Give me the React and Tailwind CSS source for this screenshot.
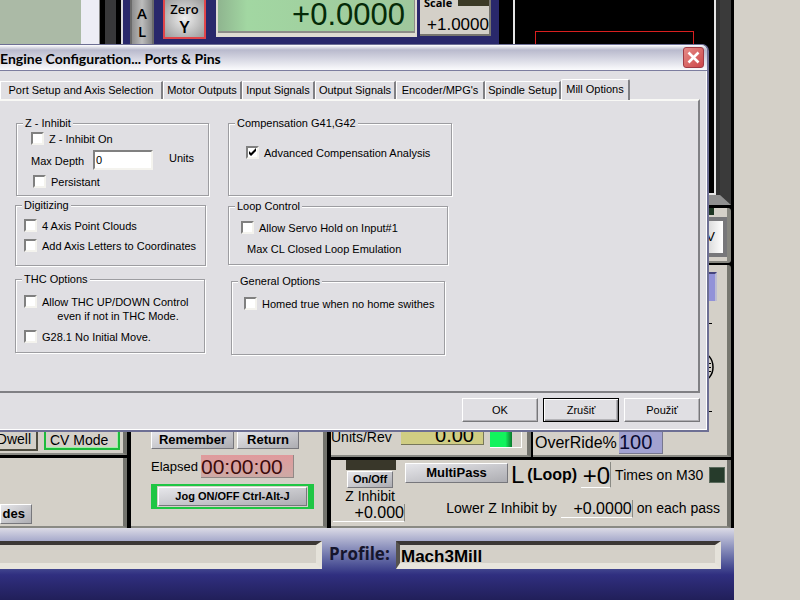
import React, { useState } from 'react';

const TABS = [
    'Port Setup and Axis Selection',
    'Motor Outputs',
    'Input Signals',
    'Output Signals',
    "Encoder/MPG's",
    'Spindle Setup',
    'Mill Options',
];

const TAB_WIDTHS = ['w-[163px]', 'w-[79px]', 'w-[73px]', 'w-[81px]', 'w-[89px]', 'w-[76px]', 'w-[69px]'];

const SILVER = 'border border-t-white border-l-white border-r-[#77777c] border-b-[#77777c] bg-linear-to-br from-[#e6e6ea] to-[#adadb2] font-bold text-black';

function Group({ title, className, children }) {
    return (
        <fieldset className={`border border-[#9d9da1] px-[6px] shadow-[1px_1px_0_#fff,inset_1px_1px_0_#fff] ${className}`}>
            <legend className="bg-[#e0dfe3] px-[2px] leading-[13px]">{title}</legend>
            {children}
        </fieldset>
    );
}

function Check({ label, defaultChecked = false, className = '' }) {
    return (
        <label className={`flex items-start gap-[5px] leading-[14px] ${className}`}>
            <span className="grid shrink-0">
                <input
                    type="checkbox"
                    defaultChecked={defaultChecked}
                    className="peer col-start-1 row-start-1 size-[13px] appearance-none border-2 border-t-[#808080] border-r-[#f4f3ee] border-b-[#f4f3ee] border-l-[#808080] bg-white"
                />
                <svg viewBox="0 0 13 13" className="pointer-events-none invisible col-start-1 row-start-1 size-[13px] peer-checked:visible">
                    <path d="M3 5v3l2 2 5-5V2L5 7z" fill="#000" />
                </svg>
            </span>
            <span className="whitespace-pre">{label}</span>
        </label>
    );
}

function DialogButton({ children, primary }) {
    return (
        <button
            className={`h-[24px] w-[76px] bg-[#e0dfe3] text-center leading-[20px] ${
                primary
                    ? 'border border-black shadow-[inset_1px_1px_0_#fff,inset_-1px_-1px_0_#85858a,inset_-2px_-2px_0_#b5b4b8]'
                    : 'border border-t-white border-r-[#77777a] border-b-[#77777a] border-l-white shadow-[inset_-1px_-1px_0_#b0afb3]'
            }`}
        >
            {children}
        </button>
    );
}

function PortsAndPins() {
    const [tab, setTab] = useState('Mill Options');

    return (
        <section className="absolute top-[44px] right-[91px] left-0 rounded-tr-[7px] border-t border-r-2 border-b-2 border-[#6d6f94] bg-[#e0dfe3] text-[11px] text-black shadow-[inset_-1px_-1px_0_#fff]">
            <header className="flex h-[26px] items-center justify-between rounded-tr-[6px] border-b border-[#7c7d9f] bg-linear-to-b from-white via-[#b9bacd] via-20% to-[#fbfbfd] pr-[3px]">
                <h1 className="pt-[2px] font-['Lato',sans-serif] text-[14px] leading-[16px] font-bold whitespace-nowrap">
                    Engine Configuration... Ports &amp; Pins
                </h1>
                <button aria-label="Close" className="grid size-[21px] place-items-center rounded-[3px] border border-[#a03a44] bg-linear-to-br from-[#e58a88] to-[#cc4448]">
                    <svg viewBox="0 0 13 13" className="size-[13px]" stroke="#fff" strokeWidth="2.6">
                        <path d="M1.5 1.5l10 10M11.5 1.5l-10 10" />
                    </svg>
                </button>
            </header>

            <div className="pt-[8px] pr-[7px] pb-[8px]">
                <nav className="flex items-end">
                    {TABS.map((name, i) => (
                        <button
                            key={name}
                            onClick={() => setTab(name)}
                            className={`shrink-0 border-t border-r-2 border-l border-t-white border-r-[#808084] border-l-white text-center whitespace-nowrap ${TAB_WIDTHS[i]} ${
                                tab === name ? 'relative z-10 -mb-px h-[21px] rounded-t-[2px] bg-[#e0dfe3] pb-[2px]' : 'h-[18px]'
                            }`}
                        >
                            {name}
                        </button>
                    ))}
                </nav>

                <div className="flex items-start gap-[19px] border-t-2 border-r-2 border-b-2 border-t-[#f8f8f5] border-r-[#808084] border-b-[#808084] pt-[16px] pb-[36px] pl-[15px]">
                    <div className="flex w-[194px] flex-col gap-[3px]">
                        <Group title="Z - Inhibit" className="ml-px h-[79px]">
                            <Check label="Z - Inhibit On" className="ml-[8px] pt-[2px]" />
                            <div className="mt-[3px] flex h-[21px] items-center pl-[8px]">
                                <label htmlFor="depth" className="w-[62px] pt-[4px]">Max Depth</label>
                                <input
                                    id="depth"
                                    defaultValue="0"
                                    className="h-[20px] w-[60px] border-2 border-t-[#808080] border-r-[#f4f3ee] border-b-[#f4f3ee] border-l-[#808080] bg-white px-[1px] outline-none"
                                />
                                <span className="pb-[3px] pl-[16px]">Units</span>
                            </div>
                            <Check label="Persistant" className="mt-[5px] ml-[10px]" />
                        </Group>
                        <Group title="Digitizing" className="h-[67px] w-[191px]">
                            <Check label="4 Axis Point Clouds" className="mt-[7px] ml-[2px]" />
                            <Check label="Add Axis Letters to Coordinates" className="mt-[6px] ml-[2px]" />
                        </Group>
                        <Group title="THC Options" className="mt-[4px] h-[80px] w-[190px]">
                            <Check label={'Allow THC UP/DOWN Control\n     even if not in THC Mode.'} className="mt-[9px] ml-[2px]" />
                            <Check label="G28.1 No Initial Move." className="mt-[7px] ml-[2px]" />
                        </Group>
                    </div>

                    <div className="flex w-[224px] flex-col gap-[4px]">
                        <Group title="Compensation G41,G42" className="h-[79px]">
                            <Check label="Advanced Compensation Analysis" defaultChecked className="mt-[16px] ml-[11px]" />
                        </Group>
                        <Group title="Loop Control" className="h-[65px] w-[220px]">
                            <Check label="Allow Servo Hold on Input#1" className="mt-[8px] ml-[6px]" />
                            <p className="mt-[8px] ml-[12px] leading-[13px]">Max CL Closed Loop Emulation</p>
                        </Group>
                        <Group title="General Options" className="mt-[6px] ml-[3px] h-[80px] w-[214px]">
                            <Check label="Homed true when no home swithes" className="mt-[9px] ml-[6px]" />
                        </Group>
                    </div>
                </div>

                <footer className="flex justify-end gap-[5px] pt-[5px]">
                    <DialogButton>OK</DialogButton>
                    <DialogButton primary>Zrušiť</DialogButton>
                    <DialogButton>Použiť</DialogButton>
                </footer>
            </div>
        </section>
    );
}

// axis readouts along the top of the mill screen
function AxisBar() {
    return (
        <div className="flex h-[44px] min-w-0 flex-1 overflow-hidden bg-[#29286b]">
            <div className="w-[81px] shrink-0 bg-[#abbaa6]" />
            <div className="w-[18px] shrink-0 bg-[#ededf5]" />
            <div className="flex w-[24px] shrink-0 justify-center border-r-2 border-l border-r-[#d8d8dc] border-l-[#888] bg-black">
                <div className="w-[11px] bg-[#38383a]" />
            </div>
            <button className="ml-[7px] flex h-[60px] w-[24px] shrink-0 flex-col items-center border-x-2 border-x-[#6b6b6b] bg-linear-to-r from-[#8d8d8d] via-[#bdbdbd] to-[#858585] pt-[4px] font-['Open_Sans',sans-serif] text-[15px] leading-[18px] font-semibold">
                <span>A</span>
                <span>L</span>
                <span>L</span>
            </button>
            <button className="ml-[9px] flex h-[39px] w-[43px] shrink-0 flex-col items-center border-2 border-t-0 border-[#e0454a] bg-radial from-[#f0f0f0] to-[#9b9b9b] font-['Open_Sans',sans-serif] font-semibold">
                <span className="text-[13px] leading-[18px]">Zero</span>
                <span className="text-[17px] leading-[18px]">Y</span>
            </button>
            <div className="ml-[10px] h-[37px] min-w-0 flex-1 border-x-2 border-b-4 border-[#dedbd2]">
                <output className="block h-full border-r border-b-2 border-[#8c8c88] bg-linear-to-r from-[#8fb58f] via-[#a2d7a2] via-15% to-[#9fc79c] pr-[9px] text-right text-[31px] leading-[30px] text-[#052b08]">
                    +0.0000
                </output>
            </div>
            <div className="mr-[8px] ml-[3px] h-[36px] w-[71px] shrink-0 border-r-2 border-b-2 border-[#77756e] bg-[#d4d0c8]">
                <div className="flex h-[8px] justify-between pl-[4px]">
                    <span className="font-['Open_Sans',sans-serif] text-[11px] leading-[6px] font-bold">Scale</span>
                    <span className="h-[6px] w-[31px] bg-[#3c3a26]" />
                </div>
                <output className="block pt-[7px] text-right text-[17px] leading-[20px]">+1.0000</output>
            </div>
        </div>
    );
}

function RightColumn() {
    return (
        <div className="flex w-[235px] shrink-0 flex-col bg-black pr-[3px]">
            <div className="flex h-[205px] border-r-[11px] border-b-[10px] border-r-[#3a3a3a] border-b-[#8f8f8f] pl-[14px]">
                <div className="flex-1 border-x-2 border-b-2 border-[#e6e6e6] px-[20px] pt-[31px]">
                    <div className="h-[110px] border border-[#d81f1f]" />
                </div>
                <div className="w-[4px] bg-[#303030]" />
            </div>
            <div className="mt-[3px] flex h-[55px] flex-col items-end rounded-[3px] border-r-4 border-b-2 border-[#86867f] bg-[#d4d0c8]">
                <div className="mr-[13px] h-[7px] w-[16px] bg-[#1d3522]" />
                <button className="mt-[2px] h-[40px] w-[56px] border-4 border-[#77777a] bg-linear-to-r from-[#8f8f8f] to-white pr-[8px] text-right text-[13px] leading-[30px]">
                    V
                </button>
            </div>
            <div className="mt-[2px] flex flex-1 flex-col items-end rounded-t-[3px] border-r-4 border-[#77776f] bg-[#d4d0c8] pt-[7px]">
                <div className="mr-[10px] h-[29px] w-[40px] border-t-2 border-r-2 border-t-[#45457d] border-r-[#bcbcd2] bg-[#9292d8]" />
                <svg viewBox="0 0 30 100" className="mt-[18px] mr-[13px] h-[100px] w-[30px] shrink-0" fill="none" stroke="#000">
                    <path d="M20 4.500h8M20 92.500h8" />
                    <ellipse cx="18" cy="48" rx="11" ry="14" strokeWidth="1.500" />
                    <path d="M16 44.500h11M16 48.500h11M16 52.500h11" />
                </svg>
            </div>
        </div>
    );
}

const PANEL = 'border-r-4 border-b-2 border-r-[#73736d] border-b-[#8a8a84] bg-[#d4d0c8]';

function LeftPanels() {
    return (
        <div className="flex w-[127px] shrink-0 flex-col gap-[3px]">
            <div className={`flex h-[25px] items-start gap-[6px] ${PANEL}`}>
                <button className="flex h-[21px] w-[38px] items-center justify-end border-r-2 border-b-2 border-[#4e4c40] pr-[5px] text-[14px]">Dwell</button>
                <button className="h-[20px] w-[76px] border-2 border-t-0 border-[#1dbb3c] pl-[4px] text-left text-[14px] leading-[20px] shadow-[inset_-1px_-1px_0_#9df0a5]">CV Mode</button>
            </div>
            <div className={`flex-1 pt-[43px] ${PANEL}`}>
                <button className={`h-[20px] w-[32px] pr-[6px] text-right text-[13px] leading-[18px] ${SILVER}`}>des</button>
            </div>
        </div>
    );
}

function JogPanel() {
    return (
        <div className={`flex w-[196px] shrink-0 flex-col pl-[20px] ${PANEL}`}>
            <div className="flex gap-[3px]">
                <button className={`h-[19px] w-[83px] text-[13px] leading-[18px] ${SILVER}`}>Remember</button>
                <button className={`h-[19px] w-[62px] text-[13px] leading-[18px] ${SILVER}`}>Return</button>
            </div>
            <div className="mt-[6px] flex items-center gap-[3px]">
                <span className="w-[47px] text-[13px]">Elapsed</span>
                <output className="h-[23px] w-[93px] border-r border-b border-[#918886] bg-linear-to-b from-[#e09a9c] to-[#cda9a5] text-[21px] leading-[23px] text-[#3d0a0a]">
                    00:00:00
                </output>
            </div>
            <div className="mt-[6px] h-[25px] w-[163px] border-x-[6px] border-y-2 border-[#1fc644] bg-[#d4d0c8] px-px py-px">
                <button className={`block h-[19px] w-full text-[11px] leading-[17px] ${SILVER}`}>Jog ON/OFF Ctrl-Alt-J</button>
            </div>
        </div>
    );
}

function LoopPanels() {
    return (
        <div className="flex min-w-0 flex-1 flex-col gap-[3px]">
            <div className="flex h-[27px] gap-[2px]">
                <div className={`flex w-[200px] overflow-hidden ${PANEL}`}>
                    <span className="w-[70px] text-[14px] leading-[14px]">Units/Rev</span>
                    <output className="h-[15px] w-[83px] border-r border-b border-[#77775a] bg-[#d0cd83] pr-[9px] text-right text-[20px] leading-[10px]">0.00</output>
                    <span className="ml-[6px] flex h-[18px] w-[32px] border-r border-b border-white">
                        <span className="h-[17px] w-[22px] bg-linear-to-r from-[#12f35d] from-70% to-[#0a7a2c]" />
                    </span>
                </div>
                <div className={`flex flex-1 items-start gap-[4px] pl-[2px] ${PANEL}`}>
                    <span className="w-[80px] pt-[4px] text-[16px] leading-[18px]">OverRide%</span>
                    <output className="h-[24px] w-[44px] border-r border-b border-[#77778f] bg-[#a2a2d0] text-[20px] leading-[25px] text-[#0a0a30]">100</output>
                </div>
            </div>
            <div className={`flex flex-1 pl-[2px] ${PANEL}`}>
                <div className="flex w-[72px] shrink-0 flex-col items-end">
                    <div className="mr-[9px] h-[10px] w-[50px] bg-[#39372a]" />
                    <button className={`mt-px mr-[12px] h-[17px] w-[46px] text-[11px] leading-[15px] ${SILVER}`}>On/Off</button>
                    <span className="mr-[10px] text-[14px] leading-[16px]">Z Inhibit</span>
                    <output className="h-[18px] w-[72px] border-r border-b border-r-[#8a8a84] border-b-white text-right text-[16px] leading-[18px]">+0.000</output>
                </div>
                <div className="flex min-w-0 flex-1 flex-col whitespace-nowrap">
                    <div className="flex h-[30px] items-center">
                        <button className={`-mt-[5px] h-[20px] w-[103px] text-[13px] leading-[18px] ${SILVER}`}>MultiPass</button>
                        <span className="ml-[3px] text-[24px] leading-[28px]">L</span>
                        <span className="ml-[3px] text-[16px] font-bold">(Loop)</span>
                        <output className="ml-[4px] h-[26px] w-[30px] border-r border-b border-r-[#8a8a84] border-b-white text-right text-[24px] leading-[28px]">+0</output>
                        <span className="ml-[4px] w-[94px] text-[14px]">Times on M30</span>
                        <span className="size-[16px] border border-[#5a6a5c] bg-[#263b2b]" />
                    </div>
                    <div className="mt-[8px] flex items-center justify-end pr-[7px] text-[14px]">
                        <span>Lower Z Inhibit by</span>
                        <output className="mr-[4px] ml-[4px] h-[18px] w-[72px] border-r border-b border-r-[#8a8a84] border-b-white text-right text-[16px] leading-[18px]">+0.0000</output>
                        <span>on each pass</span>
                    </div>
                </div>
            </div>
        </div>
    );
}

function StatusBar() {
    const field = 'h-[28px] border-t-4 border-r-[6px] border-b-[6px] border-t-[#3b3735] border-r-[#e5e2da] border-b-[#e8e5dd] bg-[#d4d0c8]';

    return (
        <footer className="flex flex-1 items-start bg-linear-to-b from-[#dcdbe6] via-[#302f80] via-65% to-[#211f59] pt-[13px]">
            <div className={`w-[322px] shrink-0 ${field}`} />
            <label htmlFor="profile" className="w-[74px] pl-[7px] font-['Open_Sans',sans-serif] text-[17px] leading-[25px] font-bold text-[#15152c]">
                Profile:
            </label>
            <input
                id="profile"
                readOnly
                value="Mach3Mill"
                className={`mr-[13px] min-w-0 flex-1 border-l-4 border-l-[#55524e] px-px pt-[5px] text-[17px] leading-[16px] font-semibold outline-none ${field}`}
            />
        </footer>
    );
}

export default function App() {
    return (
        <div className="relative flex min-h-screen overflow-hidden bg-[#d4d0c8] font-['Liberation_Sans',Arial,sans-serif] text-black">
            <main className="flex min-w-0 flex-1 flex-col bg-black">
                <div className="flex h-[430px]">
                    <AxisBar />
                    <RightColumn />
                </div>
                <div className="flex h-[98px] gap-[4px] pr-[3px]">
                    <LeftPanels />
                    <JogPanel />
                    <LoopPanels />
                </div>
                <StatusBar />
            </main>
            <div className="w-[66px] shrink-0" />
            <PortsAndPins />
        </div>
    );
}
